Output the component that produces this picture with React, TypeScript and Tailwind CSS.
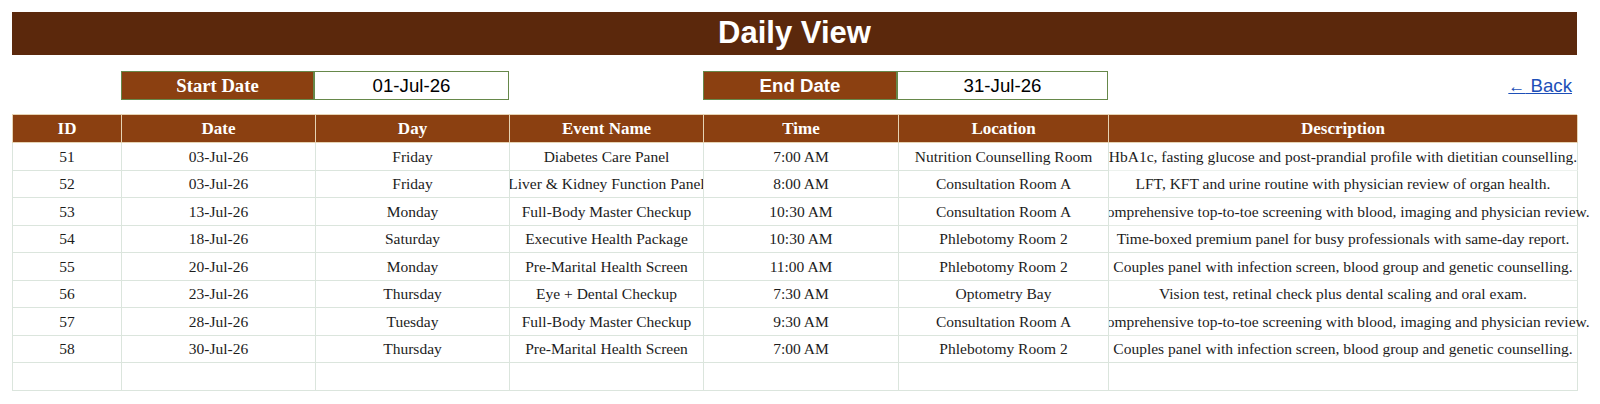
import React from "react";

type Row = {
  id: string;
  date: string;
  day: string;
  event: string;
  time: string;
  location: string;
  description: string;
};

const rows: Row[] = [
  { id: "51", date: "03-Jul-26", day: "Friday", event: "Diabetes Care Panel", time: "7:00 AM", location: "Nutrition Counselling Room", description: "HbA1c, fasting glucose and post-prandial profile with dietitian counselling." },
  { id: "52", date: "03-Jul-26", day: "Friday", event: "Liver & Kidney Function Panel", time: "8:00 AM", location: "Consultation Room A", description: "LFT, KFT and urine routine with physician review of organ health." },
  { id: "53", date: "13-Jul-26", day: "Monday", event: "Full-Body Master Checkup", time: "10:30 AM", location: "Consultation Room A", description: "Comprehensive top-to-toe screening with blood, imaging and physician review." },
  { id: "54", date: "18-Jul-26", day: "Saturday", event: "Executive Health Package", time: "10:30 AM", location: "Phlebotomy Room 2", description: "Time-boxed premium panel for busy professionals with same-day report." },
  { id: "55", date: "20-Jul-26", day: "Monday", event: "Pre-Marital Health Screen", time: "11:00 AM", location: "Phlebotomy Room 2", description: "Couples panel with infection screen, blood group and genetic counselling." },
  { id: "56", date: "23-Jul-26", day: "Thursday", event: "Eye + Dental Checkup", time: "7:30 AM", location: "Optometry Bay", description: "Vision test, retinal check plus dental scaling and oral exam." },
  { id: "57", date: "28-Jul-26", day: "Tuesday", event: "Full-Body Master Checkup", time: "9:30 AM", location: "Consultation Room A", description: "Comprehensive top-to-toe screening with blood, imaging and physician review." },
  { id: "58", date: "30-Jul-26", day: "Thursday", event: "Pre-Marital Health Screen", time: "7:00 AM", location: "Phlebotomy Room 2", description: "Couples panel with infection screen, blood group and genetic counselling." },
];

const headers = ["ID", "Date", "Day", "Event Name", "Time", "Location", "Description"];

const gridCols = "grid grid-cols-[109px_194px_194px_194px_195px_210px_469px]";
const bodyCell =
  "flex h-[27.55px] items-center justify-center whitespace-nowrap border-r border-b border-[#dbe5dd]";

export default function App() {
  return (
    <div className="min-h-[404px] bg-white pt-3 pl-3">
      <div className="w-[1565px]">
        <div className="flex h-[43px] items-center justify-center bg-[#5b280c] font-['Liberation_Sans',Arial,sans-serif] text-[31px] font-bold text-white">
          Daily View
        </div>

        {/* date range row */}
        <div className="mt-4 flex h-[29px]">
          <div className="w-[109px]" />
          <div className="flex w-[388px] border border-[#66884a]">
            <div className="flex w-[193px] items-center justify-center border-r-2 border-[#66884a] bg-[#8b4011] font-['Liberation_Serif',serif] text-[18.67px] font-bold text-white">
              Start Date
            </div>
            <div className="flex flex-1 items-center justify-center bg-white font-['Liberation_Sans',Arial,sans-serif] text-[18.67px] text-black">
              01-Jul-26
            </div>
          </div>
          <div className="w-[194px]" />
          <div className="flex w-[405px] border border-[#66884a]">
            <div className="flex w-[194px] items-center justify-center border-r-2 border-[#66884a] bg-[#8b4011] font-['Liberation_Sans',Arial,sans-serif] text-[18.67px] font-bold text-white">
              End Date
            </div>
            <div className="flex flex-1 items-center justify-center bg-white font-['Liberation_Sans',Arial,sans-serif] text-[18.67px] text-black">
              31-Jul-26
            </div>
          </div>
          <div className="flex flex-1 items-center justify-end pr-[5px]">
            <a href="#" className="font-['Liberation_Sans',Arial,sans-serif] text-[18.67px] text-[#1d4fb8] underline">
              <span className="text-[17px]">←</span> Back
            </a>
          </div>
        </div>

        {/* events table */}
        <div className="mt-[14px] font-['Liberation_Serif',serif]">
          <div className={`${gridCols} border-t border-l border-[#e6d3b3]`}>
            {headers.map((h) => (
              <div
                key={h}
                className="flex h-[28px] items-center justify-center border-r border-b border-[#e6d3b3] bg-[#8b4011] text-[17px] font-bold text-white"
              >
                {h}
              </div>
            ))}
          </div>
          <div className={`${gridCols} border-l border-[#dbe5dd] text-[15.5px] text-[#1c1c1c]`}>
            {rows.map((r) => (
              <React.Fragment key={r.id}>
                <div className={`${bodyCell} overflow-hidden`}>{r.id}</div>
                <div className={`${bodyCell} overflow-hidden`}>{r.date}</div>
                <div className={`${bodyCell} overflow-hidden`}>{r.day}</div>
                <div className={`${bodyCell} overflow-hidden`}>{r.event}</div>
                <div className={`${bodyCell} overflow-hidden`}>{r.time}</div>
                <div className={`${bodyCell} overflow-hidden`}>{r.location}</div>
                <div className={`${bodyCell} [clip-path:inset(0_-60px_0_0)]`}>{r.description}</div>
              </React.Fragment>
            ))}
            {headers.map((h) => (
              <div key={h} className={bodyCell} />
            ))}
          </div>
        </div>
      </div>
    </div>
  );
}
